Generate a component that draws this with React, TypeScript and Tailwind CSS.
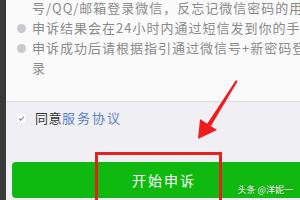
const cjk = { fontFamily: '"Noto Sans CJK SC", "Noto Sans", sans-serif' };

const tips = [
  { text: "号/QQ/邮箱登录微信，反忘记微信密码的用户", dot: false },
  { text: "申诉结果会在24小时内通过短信发到你的手机", dot: true },
  { text: "申诉成功后请根据指引通过微信号+新密码登", dot: true },
  { text: "录", dot: false },
];

export default function App() {
  return (
    <div className="relative flex w-[300px] h-[200px] overflow-hidden bg-[#f0f0f4]" style={cjk}>
      <div className="w-[6px] shrink-0 bg-[#3a3a3a]" />
      <div className="flex flex-1 flex-col min-w-0">
        <div className="h-[102px] shrink-0 border-b border-[#dcdce0] bg-[#fafafa] overflow-hidden">
          <ul className="-mt-[2px]">
            {tips.map((t, i) => (
              <li key={i} className="flex items-center h-[20px] whitespace-nowrap">
                <span
                  className={
                    t.dot
                      ? "ml-[11px] mr-[6px] w-[9px] h-[9px] shrink-0 rounded-full bg-[#c9c9d0]"
                      : "ml-[11px] mr-[6px] w-[9px] h-[9px] shrink-0"
                  }
                />
                <span className="text-[13px] leading-[20px] tracking-[1px] text-[#8a8a8a]">{t.text}</span>
              </li>
            ))}
          </ul>
        </div>
        <div className="flex items-center h-[30px] mt-[1px] pl-[11px]">
          <span className="flex items-center justify-center w-[8px] h-[8px] bg-white rounded-[1px]">
            <svg viewBox="0 0 10 10" className="w-[7px] h-[7px]">
              <path d="M1.5 5.2 L4 7.5 L8.5 2.5" fill="none" stroke="#777" strokeWidth="1.5" />
            </svg>
          </span>
          <span className="ml-[10px] text-[13px] tracking-[0.5px] text-[#333]">同意</span>
          <span className="text-[13px] tracking-[2px] text-[#5a82c8]">服务协议</span>
        </div>
        <div className="mt-[29px] ml-[6px] w-[300px] h-[36px] shrink-0 rounded-[4px] bg-[#10b90f] flex items-center pl-[120px]">
          <span className="text-[14px] tracking-[2px] text-white">开始申诉</span>
        </div>
      </div>

      <div className="absolute left-[95px] top-[152px] w-[127px] h-[60px] border-[3px] border-[#e4221d]" />

      <svg className="absolute left-0 top-0 w-[300px] h-[200px] pointer-events-none" viewBox="0 0 300 200">
        <path d="M236 80 L237.5 81.5 L211 126 L207 124 Z" fill="#f01c1c" />
        <path d="M198 139 L200 119 L217 130 Z" fill="#f01c1c" />
      </svg>

      <span className="absolute right-[7px] bottom-[4px] text-[9px] text-white" style={{ textShadow: "0 0 2px rgba(0,0,0,0.4)" }}>
        头条 @洋妮一
      </span>
    </div>
  );
}
